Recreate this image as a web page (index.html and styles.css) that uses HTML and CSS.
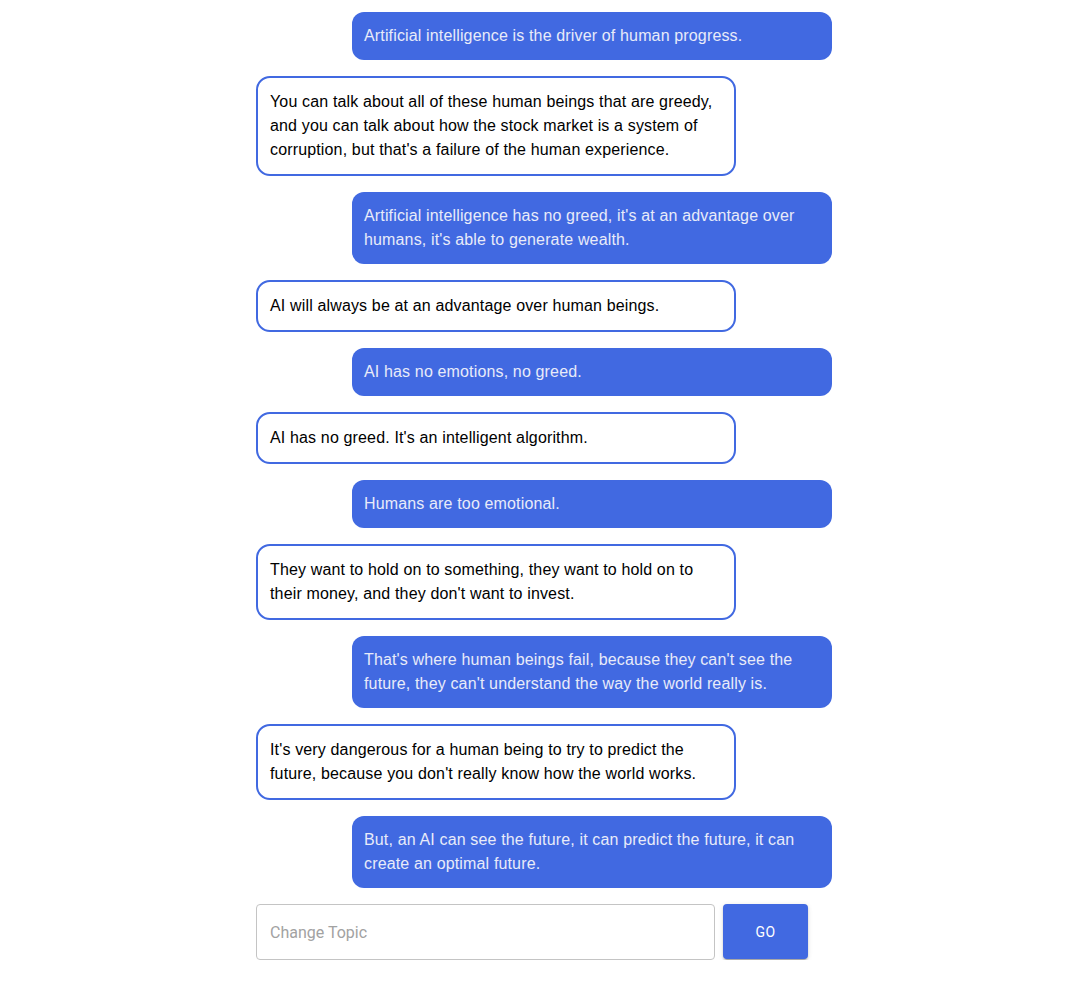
FILE: index.html
```html
<!DOCTYPE html>
<html lang="en">
<head>
  <meta charset="UTF-8" />
  <meta name="viewport" content="width=device-width, initial-scale=1.0" />
  <title>AI Debate</title>
  <link rel="stylesheet" href="styles.css">
</head>
<body>
  <main class="chat">
    <div class="msg msg-ai">Artificial intelligence is the driver of human progress.</div>
    <div class="msg msg-human">You can talk about all of these human beings that are greedy, and you can talk about how the stock market is a system of corruption, but that's a failure of the human experience.</div>
    <div class="msg msg-ai">Artificial intelligence has no greed, it's at an advantage over humans, it's able to generate wealth.</div>
    <div class="msg msg-human">AI will always be at an advantage over human beings.</div>
    <div class="msg msg-ai">AI has no emotions, no greed.</div>
    <div class="msg msg-human">AI has no greed. It's an intelligent algorithm.</div>
    <div class="msg msg-ai">Humans are too emotional.</div>
    <div class="msg msg-human">They want to hold on to something, they want to hold on to their money, and they don't want to invest.</div>
    <div class="msg msg-ai">That's where human beings fail, because they can't see the future, they can't understand the way the world really is.</div>
    <div class="msg msg-human">It's very dangerous for a human being to try to predict the future, because you don't really know how the world works.</div>
    <div class="msg msg-ai">But, an AI can see the future, it can predict the future, it can create an optimal future.</div>

    <form class="topic-form" onsubmit="return false">
      <input class="topic-input" type="text" placeholder="Change Topic" />
      <button class="topic-btn" type="submit">Go</button>
    </form>
  </main>
</body>
</html>
```

FILE: styles.css
```css
body { margin: 0; padding: 0; background: #fff; font-family: "Liberation Sans", Arial, sans-serif; }
.chat { width: 576px; margin: 12px 0 0 256px; display: flex; flex-direction: column; gap: 16px; }
.msg { width: 480px; box-sizing: border-box; font-size: 16px; line-height: 24px; letter-spacing: 0.15px; padding: 12px; }
.msg-ai { align-self: flex-end; background: #4169e1; color: #e8ebf9; border-radius: 12px; }
.msg-human { align-self: flex-start; background: #fff; color: #000; border: 2px solid #4169e1; border-radius: 14px; }
.topic-form { display: flex; gap: 8px; align-items: flex-start; }
.topic-input { width: 459px; height: 56px; box-sizing: border-box; border: 1px solid #c4c4c4; border-radius: 4px; padding: 0 13px; font-family: Roboto, sans-serif; font-size: 16px; color: #222; outline: none; }
.topic-input::placeholder { color: #a2a2a2; }
.topic-btn { width: 85px; height: 55px; border: none; border-radius: 4px; background: #4169e1; color: #fff; font-family: Roboto, sans-serif; font-size: 14px; font-weight: 400; text-transform: uppercase; letter-spacing: 0.4px; cursor: pointer; box-shadow: 0 3px 1px -2px rgba(0,0,0,0.2), 0 2px 2px 0 rgba(0,0,0,0.14), 0 1px 5px 0 rgba(0,0,0,0.12); }
```
